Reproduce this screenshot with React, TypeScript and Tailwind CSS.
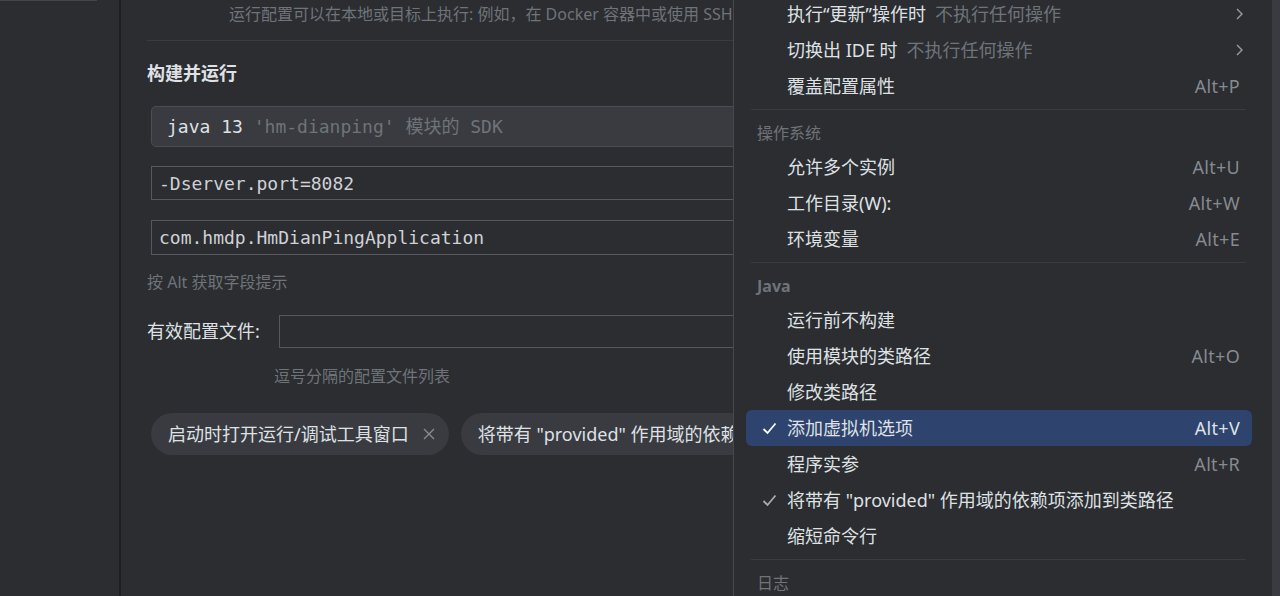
import React from 'react';

const UI = { fontFamily: '"Noto Sans", "Noto Sans CJK SC", sans-serif' };
const MONO = { fontFamily: '"DejaVu Sans Mono", "Noto Sans CJK SC", monospace' };

function Check({ color }: { color: string }) {
  return (
    <svg width="15" height="13" viewBox="0 0 15 13" fill="none">
      <path d="M1.5 7 L5.5 11 L13.5 1.5" stroke={color} strokeWidth="1.8" />
    </svg>
  );
}

function Chevron() {
  return (
    <svg width="9" height="14" viewBox="0 0 9 14" fill="none">
      <path d="M2 2 L7 7 L2 12" stroke="#9a9da3" strokeWidth="1.4" />
    </svg>
  );
}

function Cross() {
  return (
    <svg width="12" height="12" viewBox="0 0 12 12" fill="none">
      <path d="M1 1 L11 11 M11 1 L1 11" stroke="#868a91" strokeWidth="1.4" />
    </svg>
  );
}

type Item = {
  label: string;
  hint?: string;
  shortcut?: string;
  sub?: boolean;
  checked?: boolean;
  selected?: boolean;
};

function MenuRow({ item }: { item: Item }) {
  const sel = item.selected;
  return (
    <div
      className={`relative flex h-9 items-center pl-[41px] pr-3 rounded-md ${sel ? 'bg-[#2e436e]' : ''}`}
    >
      {item.checked ? (
        <span className="absolute left-[16px] top-[12px]">
          <Check color={sel ? '#ffffff' : '#a8abb0'} />
        </span>
      ) : null}
      <span className="text-[18px] leading-6 text-[#dfe1e5] whitespace-nowrap">{item.label}</span>
      {item.hint ? (
        <span className="ml-[9px] text-[18px] leading-6 text-[#6f737a] whitespace-nowrap">{item.hint}</span>
      ) : null}
      <span className="flex-1" />
      {item.shortcut ? (
        <span className={`text-[18px] leading-6 tracking-[0.3px] ${sel ? 'text-[#dfe1e5]' : 'text-[#868a91]'}`}>
          {item.shortcut}
        </span>
      ) : null}
      {item.sub ? (
        <span className="mr-[-4px] flex items-center">
          <Chevron />
        </span>
      ) : null}
    </div>
  );
}

function Sep() {
  return (
    <div className="flex h-[10px] items-center pl-[5px] pr-[6px]">
      <div className="h-px w-full bg-[#393b40]" />
    </div>
  );
}

function Header({ text, bold }: { text: string; bold?: boolean }) {
  return (
    <div className={`flex h-[35px] items-center pl-[11px] pt-[2px] text-[16px] text-[#6f737a] ${bold ? 'font-bold' : ''}`}>
      {text}
    </div>
  );
}

const top: Item[] = [
  { label: '执行“更新”操作时', hint: '不执行任何操作', sub: true },
  { label: '切换出 IDE 时', hint: '不执行任何操作', sub: true },
  { label: '覆盖配置属性', shortcut: 'Alt+P' },
];
const os: Item[] = [
  { label: '允许多个实例', shortcut: 'Alt+U' },
  { label: '工作目录(W):', shortcut: 'Alt+W' },
  { label: '环境变量', shortcut: 'Alt+E' },
];
const java: Item[] = [
  { label: '运行前不构建' },
  { label: '使用模块的类路径', shortcut: 'Alt+O' },
  { label: '修改类路径' },
  { label: '添加虚拟机选项', shortcut: 'Alt+V', checked: true, selected: true },
  { label: '程序实参', shortcut: 'Alt+R' },
  { label: '将带有 "provided" 作用域的依赖项添加到类路径', checked: true },
  { label: '缩短命令行' },
];

function Popup() {
  return (
    <div className="absolute left-[733px] top-0 h-full w-[539px] overflow-hidden border-l border-[#45484d] bg-[#2b2d30]">
      <div className="mt-[-4px] pl-[12px] pr-[20px]">
        {top.map((it) => (
          <MenuRow key={it.label} item={it} />
        ))}
        <Sep />
        <Header text="操作系统" />
        {os.map((it) => (
          <MenuRow key={it.label} item={it} />
        ))}
        <Sep />
        <Header text="Java" bold />
        {java.map((it) => (
          <MenuRow key={it.label} item={it} />
        ))}
        <Sep />
        <Header text="日志" />
      </div>
    </div>
  );
}

function Chip({ text }: { text: string }) {
  return (
    <div className="flex h-[42px] shrink-0 items-center rounded-full bg-[#393b40] pl-[17px] pr-[14px]">
      <span className="text-[18px] text-[#dfe1e5] whitespace-nowrap">{text}</span>
      <span className="ml-[14px] flex items-center">
        <Cross />
      </span>
    </div>
  );
}

function Main() {
  return (
    <div className="flex-1 bg-[#2b2d30] pl-[26px]">
      <div className="flex h-7 items-center pl-[82px] text-[16px] text-[#6f737a] whitespace-nowrap">
        运行配置可以在本地或目标上执行: 例如，在 Docker 容器中或使用 SSH 在远程主机上执行。
      </div>
      <div className="mt-3 h-px w-[700px] bg-[#393b40]" />
      <div className="mt-[18px] flex h-7 items-center text-[18px] font-bold text-[#dfe1e5]">
        构建并运行
      </div>
      <div className="ml-1 mt-[19px] flex h-[41px] w-[680px] items-center rounded-[5px] border border-[#4a4d52] bg-[#393b40] pl-[15px]">
        <span style={MONO} className="text-[18px] text-[#dfe1e5] whitespace-pre">
          java 13 <span className="text-[#6f737a]">'hm-dianping' 模块的 SDK</span>
        </span>
      </div>
      <div className="ml-1 mt-[19px] flex h-[34px] w-[680px] items-center border border-[#55585e] pl-[7px]">
        <span style={MONO} className="text-[18px] text-[#cfd1d6]">-Dserver.port=8082</span>
      </div>
      <div className="ml-1 mt-5 flex h-[35px] w-[680px] items-center border border-[#55585e] pl-[7px]">
        <span style={MONO} className="text-[18px] text-[#cfd1d6]">com.hmdp.HmDianPingApplication</span>
      </div>
      <div className="mt-[15px] flex h-6 items-center text-[16px] text-[#6f737a]">按 Alt 获取字段提示</div>
      <div className="mt-[21px] flex items-center">
        <span className="w-[132px] text-[18px] text-[#dfe1e5]">有效配置文件:</span>
        <div className="h-[33px] w-[560px] border border-[#55585e]" />
      </div>
      <div className="mt-4 flex h-6 items-center pl-[127px] text-[16px] text-[#6f737a]">
        逗号分隔的配置文件列表
      </div>
      <div className="ml-1 mt-[25px] flex gap-3">
        <Chip text="启动时打开运行/调试工具窗口" />
        <Chip text='将带有 "provided" 作用域的依赖项添加到类路径' />
      </div>
    </div>
  );
}

export default function App() {
  return (
    <div style={UI} className="relative flex h-[596px] w-[1280px] overflow-hidden bg-[#2b2d30]">
      <div className="relative w-[119px] shrink-0 bg-[#2b2d30]">
        <div className="h-px w-[97px] bg-[#43454a]" />
      </div>
      <div className="w-[2px] shrink-0 bg-[#1e1f22]" />
      <Main />
      <Popup />
      <div className="absolute left-[1272px] top-0 h-full w-[8px] bg-[#393b40]" />
    </div>
  );
}
